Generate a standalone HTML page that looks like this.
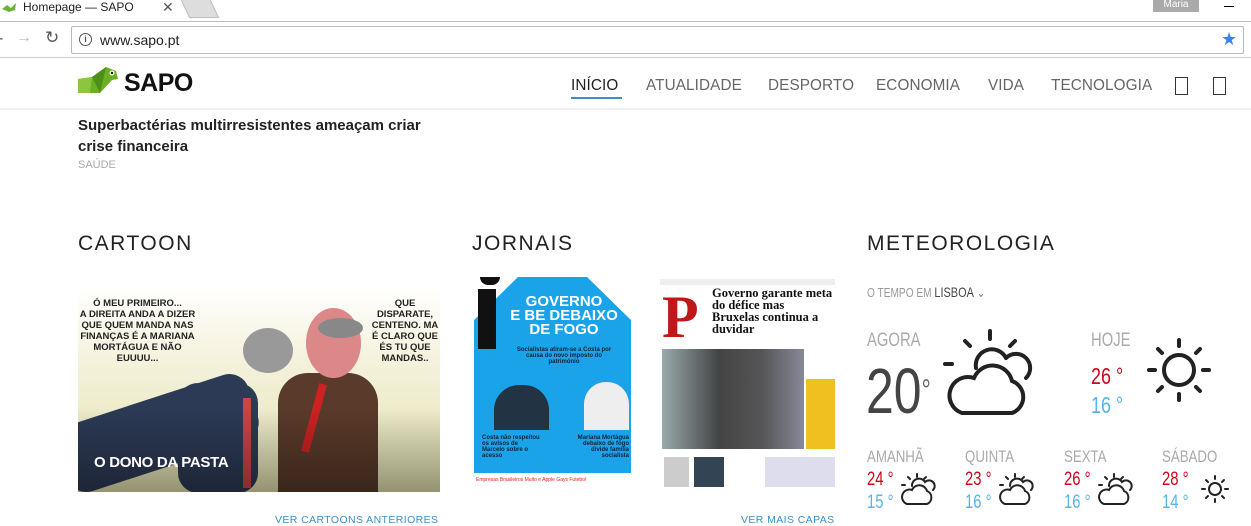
<!DOCTYPE html>
<html><head><meta charset="utf-8"><style>
*{margin:0;padding:0;box-sizing:border-box}
body{width:1251px;height:524px;overflow:hidden;background:#fff;font-family:"Liberation Sans",sans-serif;position:relative}
.a{position:absolute}
.cond{font-family:"Liberation Sans",sans-serif;transform:scaleX(.78);transform-origin:0 0;white-space:nowrap}
.nav span{position:absolute;top:77px;font-size:15.3px;color:#666;letter-spacing:.1px}
.h2{position:absolute;top:232px;font-size:21px;letter-spacing:1.5px;color:#222}
.lnk{position:absolute;top:514px;font-size:10.5px;color:#3a8fc8;letter-spacing:.4px}
.red{color:#d0021b}.blue{color:#55b4ea}
</style></head><body>
<div class="a" style="left:0;top:0;width:1251px;height:22px;background:#fff"></div>
<div class="a" style="left:0;top:21px;width:1251px;height:1px;background:#bbb"></div>
<div class="a" style="left:185px;top:0;width:30px;height:18px;background:#ddd;border:1px solid #bbb;border-top:0;transform:skewX(25deg)"></div>
<svg class="a" style="left:1px;top:2px" width="16" height="12"><path d="M1 7 L6 3 L10 6 L15 1 L14 8 L8 10 Z" fill="#6cb33e"/></svg>
<div class="a" style="left:23px;top:0;font-size:12px;color:#222">Homepage — SAPO</div>
<div class="a" style="left:162px;top:-1px;font-size:14px;color:#555">✕</div>
<div class="a" style="left:1153px;top:0;width:46px;height:12px;background:#aaa;color:#fff;font-size:10px;text-align:center;line-height:10px">Maria</div>
<div class="a" style="left:1224px;top:6px;width:10px;height:1px;background:#000"></div>
<div class="a" style="left:0;top:22px;width:1251px;height:36px;background:#fff;border-bottom:1px solid #ccc"></div>
<div class="a" style="left:-2px;top:30px;font-size:16px;color:#555">-</div>
<div class="a" style="left:16px;top:29px;font-size:16px;color:#bbb">→</div>
<div class="a" style="left:45px;top:28px;font-size:17px;color:#555">↻</div>
<div class="a" style="left:71px;top:26px;width:1173px;height:28px;border:1px solid #bbb;border-radius:2px;background:#fff"></div>
<div class="a" style="left:79px;top:33px;width:13px;height:13px;border:1.5px solid #555;border-radius:50%;font-size:9px;text-align:center;line-height:10px;color:#555;font-weight:bold">i</div>
<div class="a" style="left:100px;top:32px;font-size:14px;color:#222">www.sapo.pt</div>
<div class="a" style="left:1221px;top:29px;font-size:18px;color:#3b82f6">★</div>
<div class="a" style="left:0;top:108px;width:1251px;height:2px;background:#f0f0f0"></div>
<svg class="a" style="left:78px;top:65px" width="42" height="30"><path d="M0 14 L14 12 L28 2 L38 6 L40 14 L34 15 L22 28 L0 28 Z" fill="#6ab023"/><path d="M14 12 L28 2 L22 28 Z" fill="#4e8f17"/><path d="M0 14 L14 12 L12 28 L0 28Z" fill="#8cc63f"/><circle cx="34" cy="8" r="2.5" fill="#fff"/><circle cx="34" cy="8" r="1.2" fill="#111"/></svg>
<div class="a" style="left:124px;top:69px;font-size:25px;font-weight:bold;color:#111;letter-spacing:-.5px">SAPO</div>
<div class="nav">
<span style="left:571px;color:#222">INÍCIO</span>
<span style="left:646px">ATUALIDADE</span>
<span style="left:768px">DESPORTO</span>
<span style="left:876px">ECONOMIA</span>
<span style="left:988px">VIDA</span>
<span style="left:1051px">TECNOLOGIA</span>
</div>
<div class="a" style="left:571px;top:97px;width:51px;height:2px;background:#3a8fc8"></div>
<div class="a" style="left:1175px;top:77px;width:13px;height:18px;border:1.5px solid #333"></div>
<div class="a" style="left:1213px;top:77px;width:13px;height:18px;border:1.5px solid #333"></div>
<div class="a" style="left:78px;top:115px;width:360px;font-size:15px;font-weight:bold;color:#222;line-height:21px">Superbactérias multirresistentes ameaçam criar crise financeira</div>
<div class="a" style="left:78px;top:159px;font-size:11px;color:#aaa">SAÚDE</div>
<div class="h2" style="left:78px">CARTOON</div>
<div class="h2" style="left:472px">JORNAIS</div>
<div class="h2" style="left:867px">METEOROLOGIA</div>
<div class="a" style="left:78px;top:288px;width:362px;height:204px;background:linear-gradient(#fff 0,#f4f2dc 35%,#e2e2b0 100%);overflow:hidden">
 <div class="a" style="left:-20px;top:110px;width:200px;height:70px;background:#2d3a55;transform:rotate(-18deg);border-radius:20px"></div>
 <div class="a" style="left:100px;top:95px;width:80px;height:110px;background:#2d3a55;border-radius:20px"></div>
 <div class="a" style="left:165px;top:40px;width:50px;height:45px;background:#999;border-radius:50%"></div>
 <div class="a" style="left:200px;top:85px;width:100px;height:119px;background:#5a3a2a;border-radius:30px 30px 0 0"></div>
 <div class="a" style="left:228px;top:20px;width:55px;height:70px;background:#d88;border-radius:50%"></div>
 <div class="a" style="left:240px;top:30px;width:45px;height:20px;background:#888;border-radius:50%"></div>
 <div class="a" style="left:232px;top:95px;width:8px;height:70px;background:#c22;transform:rotate(15deg)"></div>
 <div class="a" style="left:165px;top:110px;width:8px;height:90px;background:#c44"></div>
 <div class="a" style="left:0;top:120px;width:362px;height:84px;background:linear-gradient(transparent,rgba(0,0,0,.35))"></div>
 <div class="a" style="left:-8px;top:10px;width:135px;font-size:9.5px;font-weight:bold;line-height:11px;color:#222;text-align:center">Ó MEU PRIMEIRO...<br>A DIREITA ANDA A DIZER<br>QUE QUEM MANDA NAS<br>FINANÇAS É A MARIANA<br>MORTÁGUA E NÃO<br>EUUUU...</div>
 <div class="a" style="left:282px;top:10px;width:90px;font-size:9.5px;font-weight:bold;line-height:11px;color:#222;text-align:center">QUE<br>DISPARATE,<br>CENTENO. MA<br>É CLARO QUE<br>ÉS TU QUE<br>MANDAS..</div>
 <div class="a" style="left:16px;top:166px;font-size:15px;font-weight:bold;color:#fff;letter-spacing:-.3px">O DONO DA PASTA</div>
</div>
<div class="lnk" style="left:275px">VER CARTOONS ANTERIORES</div>
<div class="a" style="left:474px;top:277px;width:157px;height:213px;background:#fff;overflow:hidden">
 <div class="a" style="left:0;top:0;width:157px;height:196px;background:#1aa3e8;clip-path:polygon(0 22%,28% 0,72% 0,100% 22%,100% 100%,0 100%)"></div>
 <div class="a" style="left:6px;top:0;width:20px;height:8px;background:#111;border-radius:0 0 10px 10px"></div>
 <div class="a" style="left:4px;top:12px;width:18px;height:60px;background:#111"></div>
 <div class="a" style="left:30px;top:18px;width:120px;text-align:center;font-size:15px;font-weight:bold;color:#fff;line-height:14px">GOVERNO<br>E BE DEBAIXO<br>DE FOGO</div>
 <div class="a" style="left:40px;top:70px;width:100px;text-align:center;font-size:6px;font-weight:bold;color:#123">Socialistas atiram-se a Costa por causa do novo imposto do património</div>
 <div class="a" style="left:20px;top:108px;width:55px;height:45px;background:#234;border-radius:25px 25px 0 0"></div>
 <div class="a" style="left:110px;top:105px;width:45px;height:48px;background:#eee;border-radius:22px 22px 0 0"></div>
 <div class="a" style="left:8px;top:158px;width:60px;font-size:6px;font-weight:bold;color:#123">Costa não respeitou os avisos de Marcelo sobre o acesso</div>
 <div class="a" style="left:95px;top:158px;width:60px;font-size:6px;font-weight:bold;color:#123;text-align:right">Mariana Mortágua debaixo de fogo divide família socialista</div>
 <div class="a" style="left:2px;top:200px;font-size:5px;color:#d22">Empresas Brasileiros Muito e Apple Gays Futebol</div>
</div>
<div class="a" style="left:660px;top:277px;width:175px;height:213px;background:#fff;overflow:hidden">
 <div class="a" style="left:0;top:2px;width:175px;height:6px;background:#eee"></div>
 <div class="a" style="left:2px;top:12px;width:40px;height:56px;color:#c01818;font-family:'Liberation Serif',serif;font-weight:bold;font-size:60px;line-height:56px">P</div>
 <div class="a" style="left:52px;top:10px;width:122px;font-family:'Liberation Serif',serif;font-weight:bold;font-size:12.5px;line-height:12px;color:#111">Governo garante meta do défice mas Bruxelas continua a duvidar</div>
 <div class="a" style="left:2px;top:72px;width:142px;height:100px;background:linear-gradient(90deg,#9aa,#444 40%,#555 70%,#889)"></div>
 <div class="a" style="left:146px;top:102px;width:29px;height:70px;background:#f0c020"></div>
 <div class="a" style="left:4px;top:180px;width:25px;height:30px;background:#ccc"></div>
 <div class="a" style="left:34px;top:180px;width:30px;height:30px;background:#345"></div>
 <div class="a" style="left:105px;top:180px;width:70px;height:30px;background:#dde"></div>
</div>
<div class="lnk" style="left:741px">VER MAIS CAPAS</div>
<div class="a cond" style="left:867px;top:284px;font-size:13px;color:#999">O TEMPO EM <span style="color:#444;font-size:14px">LISBOA</span> <span style="color:#777">⌄</span></div>
<div class="a cond" style="left:867px;top:330px;font-size:19px;color:#aaa">AGORA</div>
<div class="a cond" style="left:866px;top:358px;font-size:64px;color:#444;line-height:66px">20<span style="font-size:30px;vertical-align:top;color:#666">°</span></div>
<svg class="a" style="left:940px;top:328px" width="100" height="94" fill="none" stroke="#222" stroke-width="4" stroke-linecap="round">
 <path d="M50 3v8M25 13l5 5M75 13l-5 5M5 36h7"/>
 <path d="M36 40a16 16 0 0 1 30-10"/>
 <path d="M66 30a12 12 0 0 1 20 20"/>
 <path d="M22 85h50a17 17 0 0 0 0-32a20 20 0 0 0-38-3a17 17 0 0 0-12 35z"/>
</svg>
<div class="a cond" style="left:1091px;top:330px;font-size:19px;color:#aaa">HOJE</div>
<div class="a cond red" style="left:1091px;top:363px;font-size:23px">26 °</div>
<div class="a cond blue" style="left:1091px;top:392px;font-size:23px">16 °</div>
<svg class="a" style="left:1144px;top:336px" width="70" height="68" fill="none" stroke="#222" stroke-width="4" stroke-linecap="round">
 <circle cx="35" cy="34" r="15"/>
 <path d="M35 4v6M35 58v6M5 34h6M59 34h6M14 13l4 4M56 13l-4 4M14 55l4-4M56 55l-4-4"/>
</svg>
<div class="a cond" style="left:867px;top:447px;font-size:17px;color:#aaa">AMANHÃ</div>
<div class="a cond" style="left:965px;top:447px;font-size:17px;color:#aaa">QUINTA</div>
<div class="a cond" style="left:1064px;top:447px;font-size:17px;color:#aaa">SEXTA</div>
<div class="a cond" style="left:1162px;top:447px;font-size:17px;color:#aaa">SÁBADO</div>
<div class="a cond red" style="left:867px;top:469px;font-size:19px">24 °</div>
<div class="a cond red" style="left:965px;top:469px;font-size:19px">23 °</div>
<div class="a cond red" style="left:1064px;top:469px;font-size:19px">26 °</div>
<div class="a cond red" style="left:1162px;top:469px;font-size:19px">28 °</div>
<div class="a cond blue" style="left:867px;top:492px;font-size:19px">15 °</div>
<div class="a cond blue" style="left:965px;top:492px;font-size:19px">16 °</div>
<div class="a cond blue" style="left:1064px;top:492px;font-size:19px">16 °</div>
<div class="a cond blue" style="left:1162px;top:492px;font-size:19px">14 °</div>
<svg width="0" height="0" style="position:absolute"><defs><g id="pc" fill="none" stroke="#222" stroke-width="2" stroke-linecap="round"><path d="M17 1v3M8 4l2 2M26 4l-2 2M2 12h3"/><path d="M12 13a7 7 0 0 1 13-4a5 5 0 0 1 8 8"/><path d="M7 31h20a7 7 0 0 0 0-13a8 8 0 0 0-15-1a7 7 0 0 0-5 14z"/></g></defs></svg>
<svg class="a" style="left:900px;top:473px" width="36" height="34"><use href="#pc"/></svg>
<svg class="a" style="left:998px;top:473px" width="36" height="34"><use href="#pc"/></svg>
<svg class="a" style="left:1097px;top:473px" width="36" height="34"><use href="#pc"/></svg>
<svg class="a" style="left:1200px;top:474px" width="30" height="30" fill="none" stroke="#222" stroke-width="2" stroke-linecap="round"><circle cx="15" cy="15" r="6"/><path d="M15 2v3M15 25v3M2 15h3M25 15h3M6 6l2 2M24 6l-2 2M6 24l2-2M24 24l-2-2"/></svg>
</body></html>
